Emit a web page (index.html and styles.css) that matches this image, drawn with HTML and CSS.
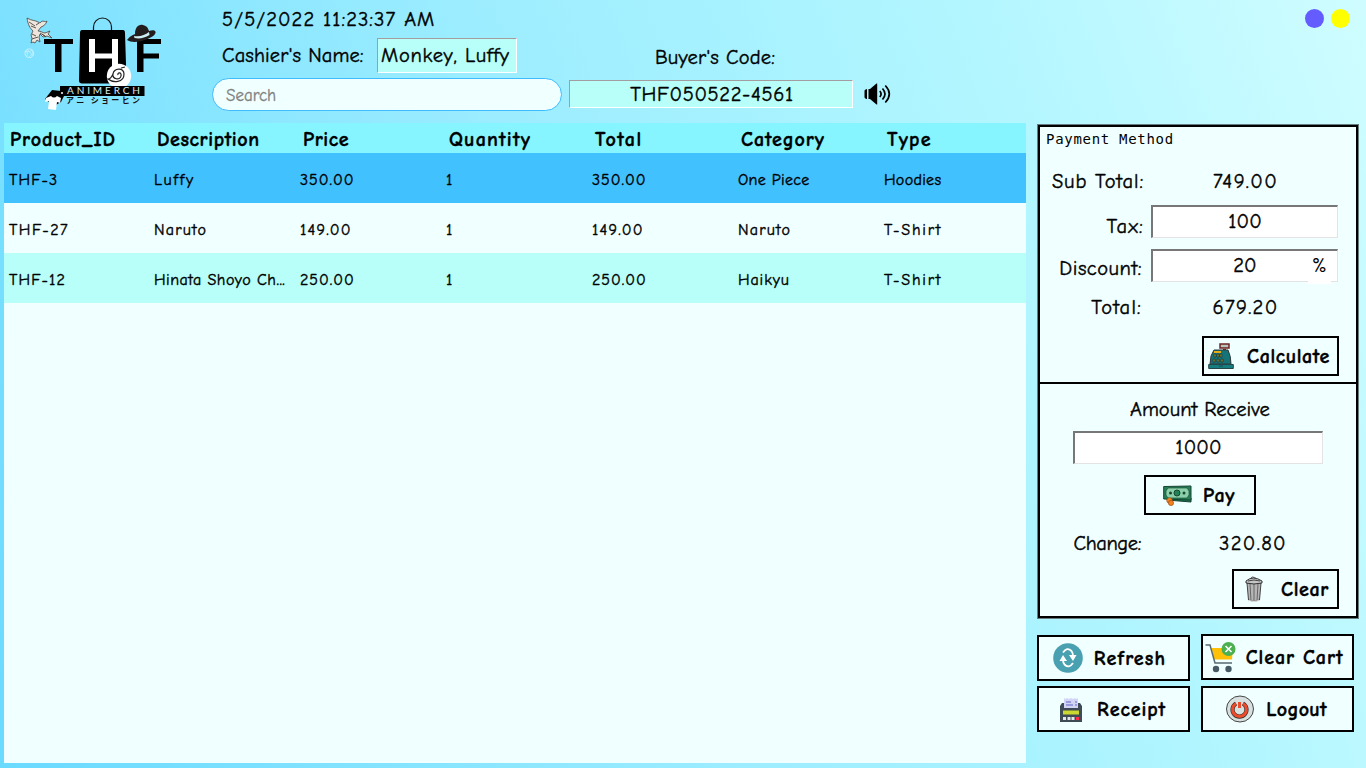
FILE: index.html
```html
<!DOCTYPE html>
<html lang="en">
<head>
<meta charset="utf-8">
<title>THF Animerch Cashier</title>
<link rel="stylesheet" href="styles.css">
</head>
<body>
<div class="app">
  <header class="top">
    <svg class="logo" width="212" height="123" viewBox="0 0 212 123">
      <path d="M93.500 31V27a9 9 0 0 1 18 0v4" fill="none" stroke="#111" stroke-width="1.200"/>
      <path d="M82 30h41q2 0 2 3l1.500 47q0 3.500-3 3.500H82q-3 0-3-3L80 33q0-3 2-3z" fill="#000"/>
      <path d="M44 39h29v5H61.500v28h-6.500V44H44zM137 39h24v5h-17.500v9.500H159v5h-15.500V72H137z" fill="#000"/>
      <path d="M89 39h6v14.500h17V39h6v33h-6V58.500H95V72h-6z" fill="#fff"/>
      <circle cx="119" cy="76" r="12.200" fill="#fff"/>
      <path d="M118 75c-1-3 4-3 3 1-1 5-9 3-8-2 1-6 11-7 11 0 0 9-11 9-16 5 3 0 4-3 5-5m8-6 4-1" fill="none" stroke="#222" stroke-width="1.200"/>
      <path d="M127 40c3-4 6-5 8-6 0-6 3-10 8-9 4 1 5 3 6 6 5-2 8 0 6 3-3 5-21 11-28 6z" fill="#241d1e"/>
      <path d="M134 36c6 1 11-1 15-4l.5 3c-5 3-10 4-15 3z" fill="#cdeef3"/>
      <path d="M27 18c5 3 8 2 11 4l2 1c3-4 5 0 7-2-1 3-3 5-6 6l-3 4c3 0 5 2 7 2l5-2-2 3 4 4-5-2-4 1-3-3-1 3 1 5-3-2-2 3-2-1-2 1 1-5-1-3 2-4c-3-3-5-6-6-13z" fill="#eee5dc" stroke="#4d4540" stroke-width=".8"/>
      <path d="m29 22 6 4m-4 0 5 2m-4 6 4 2m-4 3 6-2m2-4 5 3m-3-2 4 3m-10-12 3-2" fill="none" stroke="#4b4743" stroke-width=".9"/>
      <circle cx="29.300" cy="53.300" r="4.400" fill="none" stroke="#c5f2ff" stroke-width="1"/>
      <path d="M25 52q5 0 8-2m-6 7q1-5-1-7m3 7q4-2 4-6m-6-2 6 7" fill="none" stroke="#c5f2ff" stroke-width=".8"/>
      <rect x="60" y="86" width="84.500" height="10" fill="#000"/>
      <text x="67" y="94" class="brand" textLength="73">ANIMERCH</text>
      <text x="66" y="102.500" class="brand-jp" textLength="74">アニ ショーヒン</text>
      <path d="m45 99 7-9 9 1 3 5-3 6-7 4z" fill="#000"/>
      <path d="m46 98 5-2q3 3 6 0l4 2-1 5-3-1-1 8-8-1 1-8-4 1z" fill="#fff"/>
      <circle cx="62" cy="93" r="1" fill="#fff"/>
    </svg>
    <div class="cashier">
      <div class="clock t">5/5/2022 11:23:37 AM</div>
      <div class="cashier-row"><span class="t cname">Cashier's Name:</span><span class="etched name t">Monkey, Luffy</span></div>
      <input class="search" placeholder="Search">
    </div>
    <div class="buyer">
      <div class="t buyer-label">Buyer's Code:</div>
      <div class="etched code t">THF050522-4561</div>
    </div>
    <svg class="speaker" width="28" height="24" viewBox="0 0 28 24">
      <path d="M.500 8.500Q1.500 7 3 7v10Q1.500 17 .500 15.500zM4.500 7H6l6.500-5.500h.7v21h-.7L6 17H4.500z"/>
      <path d="M15.800 9q2.600 3 0 6M18.500 6.500q5 5.500 0 11M21.300 3.500q8 8.500 0 17" fill="none" stroke="#000" stroke-width="1.700"/>
    </svg>
    <div class="dots"><i class="dot violet"></i><i class="dot yellow"></i></div>
  </header>
  <main class="main">
    <div class="grid">
      <div class="row head"><span class="s9">Product_ID</span><span class="s6">Description</span><span class="s6">Price</span><span class="s12">Quantity</span><span class="s15">Total</span><span class="s9">Category</span><span class="s12">Type</span></div>
      <div class="row selected"><span class="s12">THF-3</span><span class="s18">Luffy</span><span>350.00</span><span>1</span><span>350.00</span><span class="s3">One Piece</span><span class="s3">Hoodies</span></div>
      <div class="row"><span class="s15">THF-27</span><span class="s12">Naruto</span><span class="s12">149.00</span><span>1</span><span class="s12">149.00</span><span class="s12">Naruto</span><span class="s18">T-Shirt</span></div>
      <div class="row alt"><span class="s12">THF-12</span><span class="s5">Hinata Shoyo Ch...</span><span>250.00</span><span>1</span><span>250.00</span><span class="s9">Haikyu</span><span class="s18">T-Shirt</span></div>
    </div>
    <aside class="side">
      <section class="panel">
        <div class="bill">
          <div class="caption">Payment Method</div>
          <div class="line sub"><label class="s9">Sub Total:</label><output>749.00</output></div>
          <div class="line tax"><label class="s12">Tax:</label><div class="field">100</div></div>
          <div class="line disc"><label class="s5">Discount:</label><div class="field">20<span class="pct">%</span></div></div>
          <div class="line total"><label class="s12">Total:</label><output>679.20</output></div>
          <button class="btn calc">
            <svg width="26" height="28" viewBox="0 0 26 28"><path d="M12 2h9v4h-9z" fill="#b9c5b9" stroke="#6d2424" stroke-width="1.500"/><path d="M15 7h3v3h-3z" fill="#6d2424"/><path d="M6 8h14q3 6 3 14H2Q2 13 6 8z" fill="#147477" stroke="#333b3d"/><path d="M6 9h7v2H6z" fill="#e7ad18"/><path d="M6 12h2v3H6zm3 0h2v3H9zm3 0h2v3h-2zM5 17h2v3H5zm4 0h2v3H9zm4 0h2v3h-2z" fill="#9a8a2c" stroke="#1c3434" stroke-width=".7"/><path d="M.7 22.500h24.600v4H.7z" fill="#147d80" stroke="#24474a"/><path d="M11 24h4" stroke="#24474a"/></svg>
            <span>Calculate</span></button>
        </div>
        <div class="pay">
          <div class="amount">Amount Receive</div>
          <div class="field wide">1000</div>
          <button class="btn paybtn">
            <svg width="29" height="21" viewBox="0 0 29 21"><path d="m4 12 24 1v4L4 15z" fill="#15734a" stroke="#174333"/><path d="M.7 1.500 28 1v14L.7 14z" fill="#247e56" stroke="#164634"/><path d="M5 3h19l2 3v4l-2 3H5l-2-3V6z" fill="#8bd0a9" stroke="#164634" stroke-width=".6"/><circle cx="14" cy="8" r="3" fill="#23815a" stroke="#164634"/><circle cx="7.500" cy="8" r="1.500" fill="#164634"/><circle cx="21" cy="8" r="1.500" fill="#164634"/><circle cx="6.500" cy="15.500" r="2.800" fill="#f4801f" stroke="#914812" stroke-width=".6"/><circle cx="8" cy="18" r="2.600" fill="#f4801f" stroke="#914812" stroke-width=".6"/></svg>
            <span>Pay</span></button>
          <div class="line change"><label>Change:</label><output>320.80</output></div>
          <button class="btn clear">
            <svg width="18" height="28" viewBox="0 0 18 28"><path d="M2 8h14l-1.500 17q-5.500 3-11 0z" fill="#b6b6b6" stroke="#444" stroke-width="1"/><path d="m5 9 1 17m3-17v17m4-17-1 17" stroke="#666" stroke-width="1"/><path d="M1 8V6q7-6 16 0v2q-8 2-16 0z" fill="#c6c6c6" stroke="#333"/><path d="M6 4q0-4 6 0M3 6q6-2 12 0" fill="none" stroke="#444"/><path d="M3.500 25.500q5.500 2 11 0" stroke="#eee" fill="none"/></svg>
            <span>Clear</span></button>
        </div>
      </section>
      <nav class="actions">
        <button class="btn refresh">
          <svg width="30" height="30" viewBox="0 0 30 30"><circle cx="15" cy="15" r="14.800" fill="#48a0b0"/><path d="M10 9.500q4-6 8.500-1.500Q20 10 20 13" fill="none" stroke="#fff" stroke-width="1.800"/><path d="M20 20q-4 6-8.500 1.500Q10 19.500 10 17" fill="none" stroke="#fff" stroke-width="1.800"/><path d="M16 12h7.500L20 18zM6.500 18 10 12l4 6z" fill="#fff"/></svg>
          <span class="s12">Refresh</span></button>
        <button class="btn cart">
          <svg width="31" height="31" viewBox="0 0 31 31"><path d="M6.500 6H28l-1 11.500H9z" fill="#ffc107"/><path d="M.5 3H5l5 18H27" fill="none" stroke="#586a73" stroke-width="1.500"/><circle cx="11" cy="27" r="3.200" fill="#455a64"/><circle cx="23.500" cy="27" r="3.200" fill="#455a64"/><circle cx="23.500" cy="7" r="7" fill="#4caf50"/><path d="m20.500 4 6 6m0-6-6 6" stroke="#fff" stroke-width="1.600"/></svg>
          <span class="s9">Clear Cart</span></button>
        <button class="btn receipt">
          <svg width="22" height="25" viewBox="0 0 22 25"><path d="M2 6h18l2 3v16H0V9z" fill="#3f4b55"/><path d="m4 1 1.500 1L7 1l2 1 2-1 2 1 2-1 1.500 1L18 1v10H4z" fill="#d3d5f7"/><path d="M6 5h5M6 8h7m2-3h2m-2 3h2" stroke="#6167bf" stroke-width="1.200"/><path d="M3 13.500h16v4H3z" fill="#cad830"/><path d="M3 20h3v3H3zm4.500 0h3v3h-3zm4 0h3v3h-3z" fill="#e6e6e6"/><path d="M16 20h3v3h-3z" fill="#ff2846"/></svg>
          <span class="s9">Receipt</span></button>
        <button class="btn logout">
          <svg width="28" height="28" viewBox="0 0 28 28"><ellipse cx="14" cy="14" rx="13.500" ry="13" fill="#d8dfdf" stroke="#333" stroke-width=".9"/><path d="M10 8.500a7 7 0 1 0 7 0" fill="none" stroke="#333" stroke-width="4.200"/><path d="M10 8.500a7 7 0 1 0 7 0" fill="none" stroke="#ee4a2c" stroke-width="3"/><path d="M13.500 7v6" stroke="#ee4a2c" stroke-width="3"/></svg>
          <span class="s3">Logout</span></button>
      </nav>
    </aside>
  </main>
</div>
</body>
</html>
```
FILE: styles.css
```css
* { box-sizing: border-box; }
body { margin: 0; color: #000; font-family: "Comic Sans MS", "Comic Neue", "Noto Sans", sans-serif; font-size: 20.5px; -webkit-text-stroke: .4px; }
.app { width: 1366px; height: 768px; overflow: hidden; background: linear-gradient(70deg, #6adaff 0%, #9cedff 45%, #b2f6ff 75%, #cffdff 100%); }
.t { white-space: nowrap; line-height: 28px; }
.top { height: 123px; display: flex; align-items: flex-start; }
.logo { flex: none; -webkit-text-stroke: 0; }
.brand { font: 10px Lato, sans-serif; fill: #d8eef3; }
.brand-jp { font: bold 8px "Noto Sans CJK JP", sans-serif; fill: #111; }
.cashier { width: 350px; padding-top: 5px; }
.clock { padding-left: 10px; height: 28px; line-height: 30px; letter-spacing: 1.05px; }
.cashier-row { display: flex; height: 40px; padding: 5px 0 0 10px; gap: 13px; }
.cname { line-height: 36px; width: 142px; letter-spacing: .1px; }
.etched { background: #b7fff8; border: 1px solid #fff; border-top-color: #a49da0; border-left-color: #a49da0; }
.name { width: 140px; height: 35px; line-height: 34px; padding-left: 3px; letter-spacing: .7px; }
.search { display: block; margin-top: 5px; width: 350px; height: 33px; border: 1px solid #3fbcff; border-radius: 17px; background: #f0ffff; padding: 1px 13px 0; font: 17px "Comic Sans MS", "Comic Neue", "Noto Sans", sans-serif; -webkit-text-stroke: .3px; }
.search::placeholder { color: #808080; }
.buyer { width: 284px; margin-left: 7px; padding-top: 43px; }
.buyer-label { height: 37px; line-height: 30px; padding-left: 86px; letter-spacing: .15px; }
.code { width: 284px; height: 28px; line-height: 28px; padding-left: 2px; text-align: center; letter-spacing: .65px; }
.speaker { margin: 82px 0 0 11px; }
.dots { margin: 9px 16px 0 auto; display: flex; gap: 7px; }
.dot { width: 19px; height: 19px; border-radius: 50%; }
.violet { background: #655cff; }
.yellow { background: #ff0; }
.main { display: flex; padding-left: 4px; gap: 11px; }
.grid { width: 1022px; height: 640px; background: #f0ffff; flex: none; }
.row { display: grid; grid-template-columns: 145px repeat(6, 146px); height: 50px; line-height: 54px; font-size: 16px; letter-spacing: 1px; }
.row span { padding-left: 5px; white-space: nowrap; }
.head { height: 30px; line-height: 34px; background: #87f5ff; font-weight: bold; font-size: 20px; }
.head span { padding-left: 8px; }
.head span:first-child { padding-left: 6px; }
.selected { background: #42c1ff; }
.alt { background: #b7fff8; }
.panel { margin-top: 1px; width: 322px; height: 495px; border: 3px solid #000; outline: 1px solid #667d80; outline-offset: -1px; background: #f0ffff; }
.bill { height: 257px; border-bottom: 2px solid #000; }
.caption { height: 32px; padding: 3px 0 0 6px; font: 14px/18px "DejaVu Sans Mono", monospace; letter-spacing: .7px; -webkit-text-stroke: 0; }
.line { display: grid; grid-template-columns: 104px 187px; column-gap: 7px; line-height: 45px; }
.line label { text-align: right; white-space: nowrap; }
.line output { text-align: center; padding-left: 2px; letter-spacing: 1.35px; }
.sub { height: 44px; }
.tax { height: 45px; line-height: 47px; }
.disc { height: 40px; line-height: 42px; }
.disc label, .total label, .change label { padding-right: 2px; }
.total { height: 39px; line-height: 40px; }
.field { position: relative; margin-top: 2px; height: 33px; line-height: 29px; text-align: center; background: #fff; border: 2px solid #e3e3e3; border-width: 2px 1px 1px 2px; border-top-color: #777; border-left-color: #777; letter-spacing: .2px; }
.disc .field { margin-top: 1px; }
.pct { position: absolute; right: 6px; top: 2px; width: 23px; height: 31px; line-height: 26px; background: #fff; -webkit-text-stroke: 0; }
.btn { display: flex; align-items: center; justify-content: center; border: 2px solid #000; border-radius: 0; background: #f0ffff; padding: 0; color: #000; font: bold 20px "Comic Sans MS", "Comic Neue", "Noto Sans", sans-serif; letter-spacing: .6px; white-space: nowrap; -webkit-text-stroke: .4px; }
.calc { width: 137px; height: 40px; margin: 9px 0 0 162px; padding-right: 3px; gap: 13px; }
.pay { padding-top: 3px; }
.amount { height: 44px; line-height: 45px; padding-left: 90px; }
.wide { width: 250px; margin: 0 0 0 33px; }
.paybtn { width: 112px; height: 40px; margin: 11px 0 0 104px; padding-right: 2px; gap: 11px; }
.change { margin-top: 9px; height: 38px; line-height: 40px; }
.change label { padding-right: 3px; letter-spacing: -.4px; }
.change output { padding-left: 17px; }
.clear { width: 107px; height: 40px; margin: 7px 0 0 192px; gap: 18px; padding-left: 3px; }
.actions { display: grid; grid-template-columns: 153px 153px; column-gap: 11px; row-gap: 5px; margin-top: 16px; }
.actions .btn { height: 46px; gap: 12px; }
.actions .refresh { gap: 11px; padding-right: 8px; }
.actions .cart { margin-top: -1px; gap: 10px; padding-right: 7px; }
.actions .receipt { gap: 15px; padding-right: 1px; }
.actions .logout { padding-right: 2px; }
.s3 { letter-spacing: .3px; }
.s5 { letter-spacing: .5px; }
.s6 { letter-spacing: .6px; }
.s9 { letter-spacing: .9px; }
.s12 { letter-spacing: 1.2px; }
.s15 { letter-spacing: 1.5px; }
.s18 { letter-spacing: 1.8px; }
```
